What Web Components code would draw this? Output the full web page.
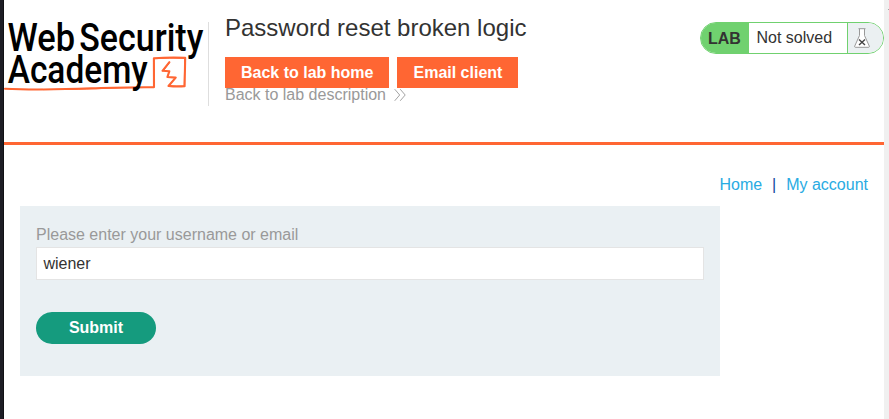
<!DOCTYPE html>
<html lang="en">
<head>
<meta charset="utf-8">
<title>Password reset broken logic</title>
<style>
html,body{margin:0;height:100%;overflow:hidden}
body{font:16px/20px "Liberation Sans",Arial,sans-serif;color:#333332;background:#fff}
</style>
</head>
<body>
<lab-page>
  <lab-header slot="header">
    <academy-logo slot="logo"></academy-logo>
    <span slot="title">Password reset broken logic</span>
    <action-link slot="actions">Back to lab home</action-link>
    <action-link slot="actions">Email client</action-link>
    <span slot="description">Back to lab description</span>
    <lab-status slot="status">Not solved</lab-status>
  </lab-header>
  <account-nav><span slot="first">Home</span><span slot="second">My account</span></account-nav>
  <reset-form value="wiener"><span slot="label">Please enter your username or email</span><span slot="submit">Submit</span></reset-form>
</lab-page>
<script>
function define(name, html, init) {
  const template = document.createElement('template');
  template.innerHTML = html;
  customElements.define(name, class extends HTMLElement {
    constructor() {
      super();
      this.attachShadow({mode: 'open'}).append(template.content.cloneNode(true));
    }
    connectedCallback() { if (init) init(this); }
  });
}

define('lab-page', `<style>
:host{display:grid;grid-template-columns:4px 880px 5px;height:419px;overflow:hidden}
.edge{background:linear-gradient(90deg,#1d1d25 3px,#101014 3px)}
.scroll{background:#f0f0f0;padding:9px 0 0 4px}
.scroll i{display:block;height:1px;background:#a5a5a5}
main{padding:0 16px}
</style><div class="edge"></div><div><slot name="header"></slot><main><slot></slot></main></div><div class="scroll"><i></i></div>`);

define('lab-header', `<style>
:host{display:grid;grid-template-columns:205px 1fr auto;height:142px;border-bottom:3px solid #ff6633}
.logo{margin-top:22px;height:84px;border-right:1px solid #dedede}
.copy{padding:14px 0 0 16px}
h1{margin:0;font-size:24px;line-height:28px;font-weight:400;white-space:nowrap}
.actions{display:flex;gap:8px;margin-top:15px}
.desc{display:flex;align-items:center;height:14px;color:#999;white-space:nowrap}
.desc svg{margin-left:8px}
.status{padding-top:22px}
</style>
<div class="logo"><slot name="logo"></slot></div>
<div class="copy"><h1><slot name="title"></slot></h1><div class="actions"><slot name="actions"></slot></div>
<div class="desc"><slot name="description"></slot><svg width="13" height="12" viewBox="0 0 13 12" fill="none" stroke="#999" stroke-width=".9"><path d="M.7.2 5.7 6 .7 11.8M6.2.2 11.2 6 6.2 11.8"/></svg></div></div>
<div class="status"><slot name="status"></slot></div>`);

define('academy-logo', `<style>
:host{display:block;height:84px}
svg{display:block;overflow:visible}
text{font-family:Roboto,sans-serif;font-weight:500;fill:#000}
</style><svg width="204" height="84" viewBox="4 22 204 84">
<text x="7.6" y="50.6" font-size="38" textLength="67.5" lengthAdjust="spacingAndGlyphs">Web</text>
<text x="79.3" y="50.6" font-size="38" textLength="124" lengthAdjust="spacingAndGlyphs">Security</text>
<g fill="none" stroke="#ff6633" stroke-linecap="round" stroke-linejoin="round">
<path stroke-width="2.1" d="M5 88.7C28 90 68 89.2 91 88.3S139 87.3 154 87.1L153.9 58.3Q170 57 185.2 57.8L184.6 86.2Q177 86.9 168.5 86L175.7 77.6 167.4 77 169.3 71.3 162.5 70.8 169.4 62.2"/>
<path stroke-width="1" d="M10 89.2Q66 90 94 88.8T154 87.4M154.5 58.7Q170 57.7 184.8 58.4L184.2 85.8Q177 86.3 169 85.5L175.2 78.1M163 71.2 169 63.5"/>
</g>
<text x="7.7" y="82.8" font-size="38" textLength="140" lengthAdjust="spacingAndGlyphs">Academy</text>
</svg>`);

define('action-link', `<style>
:host{display:block;height:31px;padding:0 16px;background:#ff6633;color:#fff;font-weight:700;line-height:31px;white-space:nowrap}
</style><slot></slot>`);

define('lab-status', `<style>
:host{display:flex;box-sizing:border-box;width:184px;height:32px;border:1px solid #70d16f;border-radius:16px;overflow:hidden;line-height:30px;background:#fff;white-space:nowrap}
b{width:48px;box-sizing:border-box;padding:1px 0 0 7px;background:#70d16f}
.state{flex:1;padding-left:7.5px}
.flask{width:35px;background:#ebf0f2;border-left:1px solid #70d16f}
svg{display:block;margin:5px 0 0 6px}
</style><b>LAB</b><span class="state"><slot></slot></span><span class="flask"><svg width="16" height="20" viewBox="0 0 16 20" fill="none"><path d="M4.5.7H11.5M5.5 1V7.5L.7 18.1Q.4 19.2 1.2 19.3H14.8Q15.6 19.2 15.3 18.1L10.5 7.5V1" fill="#fff" stroke="#999"/><path d="M5 11.5 11 17M11 11.5 5 17" stroke="#444" stroke-width="1.4"/></svg></span>`);

define('account-nav', `<style>
:host{display:flex;justify-content:flex-end;padding-top:30px;height:31px;color:#29abe2;white-space:nowrap}
i{font-style:normal;width:24px;text-align:center;color:#0e4a9b}
</style><slot name="first"></slot><i>|</i><slot name="second"></slot>`);

define('reset-form', `<style>
:host{display:block;box-sizing:border-box;width:700px;height:170px;padding:19px 16px;background:#eaf0f3}
label{display:block;height:22px;color:#999}
input{display:block;box-sizing:border-box;width:668px;height:33px;margin:0;padding:0 6.4px;border:1px solid #e4e4e4;border-radius:0;background:#fff;color:#333332;font:16px "Liberation Sans",Arial,sans-serif;outline:0}
button{display:block;width:120px;height:32px;margin:32px 0 0;padding:0;border:0;border-radius:16px;background:#159b7e;color:#fff;font:700 16px/32px "Liberation Sans",Arial,sans-serif}
</style><label for="user"><slot name="label"></slot></label><input id="user" type="text"><button type="button"><slot name="submit"></slot></button>`,
el => { el.shadowRoot.querySelector('input').value = el.getAttribute('value'); });
</script>
</body>
</html>
